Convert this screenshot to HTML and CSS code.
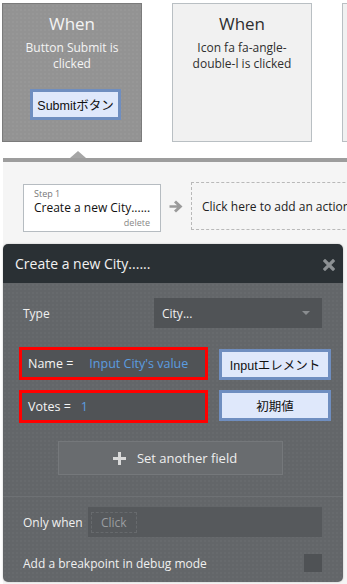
FILE: index.html
```html
<!DOCTYPE html>
<html>
<head>
<meta charset="utf-8">
<link rel="stylesheet" href="styles.css">
</head>
<body>
<div class="page">
  <div class="cards">
    <div class="card card-active">
      <div class="card-title">When</div>
      <div class="card-sub">Button Submit is clicked</div>
      <div class="jp-btn card-btn">Submitボタン</div>
    </div>
    <div class="card card-idle">
      <div class="card-title">When</div>
      <div class="card-sub">Icon fa fa-angle-double-l is clicked</div>
    </div>
    <div class="card card-idle"></div>
  </div>
  <div class="bar"></div>
  <div class="lower">
    <div class="flow">
      <div class="step">
        <div class="step-label">Step 1</div>
        <div class="step-name">Create a new City......</div>
        <div class="step-delete">delete</div>
      </div>
      <svg class="flow-arrow" width="14" height="13" viewBox="0 0 14 13"><path d="M7 0.5 L13.5 6.5 L7 12.5 L5 10.5 L8 7.8 L0.5 7.8 L0.5 5.2 L8 5.2 L5 2.5 Z" fill="#9a9a9a"/></svg>
      <div class="add-action">Click here to add an action</div>
    </div>
    <div class="panel">
      <div class="panel-head">
        <span class="panel-title">Create a new City......</span>
        <svg class="close" width="12" height="12" viewBox="0 0 12 12"><path d="M2 2 L10 10 M10 2 L2 10" stroke="#8c9093" stroke-width="3.2" stroke-linecap="square"/></svg>
      </div>
      <div class="panel-body">
        <div class="row type-row">
          <span class="label">Type</span>
          <div class="select"><span>City...</span><span class="caret"></span></div>
        </div>
        <div class="field-row first">
          <div class="field-box"><span class="fkey">Name =</span><span class="fval name-val">Input City's value</span></div>
          <div class="jp-btn side-btn side-first">Inputエレメント</div>
        </div>
        <div class="field-row second">
          <div class="field-box"><span class="fkey">Votes =</span><span class="fval votes-val">1</span></div>
          <div class="jp-btn side-btn">初期値</div>
        </div>
        <div class="set-field">
          <svg width="15" height="15" viewBox="0 0 15 15"><path d="M7.5 1 V14 M1 7.5 H14" stroke="#d9d9d9" stroke-width="3"/></svg>
          <span>Set another field</span>
        </div>
        <div class="sep"></div>
        <div class="row only-row">
          <span class="label">Only when</span>
          <div class="only-field"><span class="click-tag">Click</span></div>
        </div>
        <div class="row bp-row">
          <span class="label">Add a breakpoint in debug mode</span>
          <span class="checkbox"></span>
        </div>
      </div>
    </div>
  </div>
</div>
</body>
</html>
```
FILE: styles.css
```css
html, body {
  margin: 0;
  padding: 0;
  background: #ffffff;
}
.page {
  width: 347px;
  height: 584px;
  overflow: hidden;
  font-family: "Open Sans", "Noto Sans", sans-serif;
}
.cards {
  display: flex;
  gap: 30px;
  padding: 3px 0 0 2px;
  height: 142px;
  box-sizing: border-box;
  overflow: hidden;
}
.card {
  flex: 0 0 140px;
  height: 139px;
  box-sizing: border-box;
  text-align: center;
  padding-top: 9px;
}
.card-active {
  background-color: #939393;
  background-image: radial-gradient(rgba(255,255,255,0.08) 0.6px, transparent 0.8px);
  background-size: 4px 4px;
  border: 1px solid #7b7b7b;
  color: #f4f4f4;
}
.card-idle {
  background: #f1f1f1;
  border: 1px solid #b9bfc3;
  color: #2f2f2f;
}
.card-title {
  font-size: 17px;
  line-height: 22px;
}
.card-sub {
  font-size: 12px;
  line-height: 16px;
  margin-top: 5px;
  padding: 0 10px;
}
.jp-btn {
  font-family: "Liberation Sans", "Noto Sans CJK JP", sans-serif;
  font-size: 12.5px;
  color: #111;
  background: #dfe8fb;
  border: 3px solid #6f8ec0;
  box-sizing: border-box;
  display: flex;
  align-items: center;
  justify-content: center;
  flex: none;
}
.card-btn {
  width: 91px;
  height: 31px;
  margin: 17px 0 0 27px;
}
.bar {
  margin: 16px 0 0 3px;
  height: 4px;
  background: #9d9d9d;
  position: relative;
}
.bar::before {
  content: "";
  position: absolute;
  left: 67px;
  top: -7px;
  border-left: 8px solid transparent;
  border-right: 8px solid transparent;
  border-bottom: 7px solid #a6a6a6;
}
.lower {
  margin-left: 3px;
  background: #f5f5f5;
  height: 422px;
}
.flow {
  display: flex;
  align-items: flex-start;
  padding: 20px 0 0 20px;
  height: 82px;
  box-sizing: border-box;
  white-space: nowrap;
  overflow: hidden;
}
.step {
  margin-top: 2px;
  width: 138px;
  height: 48px;
  box-sizing: border-box;
  border: 1px solid #b6bcc1;
  background: #ffffff;
  padding: 3px 10px 0 10px;
  display: flex;
  flex-direction: column;
  flex: none;
}
.step-label {
  font-size: 9px;
  line-height: 12px;
  color: #777;
}
.step-name {
  font-size: 12px;
  line-height: 16px;
  color: #111;
}
.step-delete {
  font-size: 9px;
  line-height: 13px;
  color: #888;
  text-align: right;
}
.flow-arrow {
  margin: 18px 0 0 8px;
  flex: 0 0 auto;
}
.add-action {
  margin-left: 8px;
  height: 48px;
  box-sizing: border-box;
  border: 1px dashed #b9b9b9;
  padding-left: 10px;
  display: flex;
  align-items: center;
  font-size: 12px;
  color: #222;
  flex: 0 0 auto;
  width: 220px;
}
.panel {
  width: 340px;
  border-radius: 5px;
  overflow: hidden;
  box-shadow: 0 0 2px rgba(0,0,0,0.25);
}
.panel-head {
  height: 39px;
  background: #2a3034;
  display: flex;
  align-items: center;
  justify-content: space-between;
  padding: 0 8px 0 12px;
}
.panel-title {
  font-size: 14px;
  color: #f2f2f2;
}
.close {
  margin-top: 2px;
}
.panel-body {
  background-color: #636669;
  background-image: radial-gradient(rgba(255,255,255,0.05) 0.6px, transparent 0.8px);
  background-size: 4px 4px;
  padding: 15px 21px 10px 20px;
  color: #eeeeee;
  font-size: 12px;
}
.row {
  display: flex;
  align-items: center;
  justify-content: space-between;
}
.label {
  font-size: 12px;
  color: #f0f0f0;
}
.select {
  width: 168px;
  height: 30px;
  background: #505356;
  display: flex;
  align-items: center;
  justify-content: space-between;
  padding: 0 12px 0 8px;
  box-sizing: border-box;
  color: #f0f0f0;
}
.caret {
  border-left: 4px solid transparent;
  border-right: 4px solid transparent;
  border-top: 4px solid #8a8d90;
}
.field-row {
  display: flex;
  align-items: flex-start;
  margin-left: -4px;
}
.field-row.first { margin-top: 19px; }
.field-row.second { margin-top: 10px; }
.field-box {
  flex: none;
  width: 189px;
  height: 33px;
  box-sizing: border-box;
  border: 3px solid #ff0000;
  background: #505356;
  display: flex;
  align-items: center;
  padding-left: 6px;
  font-size: 12.5px;
}
.fkey { color: #f4f4f4; }
.fval { color: #5b9de0; }
.name-val { margin-left: 16px; }
.votes-val { margin-left: 10px; }
.side-btn {
  margin-left: 11px;
  width: 112px;
  height: 31px;
}
.side-first { margin-top: 2px; }
.set-field {
  margin: 18px 0 0 35px;
  width: 225px;
  height: 34px;
  box-sizing: border-box;
  background: #696c6f;
  border: 1px solid #75787b;
  display: flex;
  align-items: center;
  justify-content: center;
  gap: 10px;
  font-size: 13px;
  color: #eeeeee;
  padding-left: 8px;
}
.sep {
  margin: 21px -21px 0 -20px;
  height: 1px;
  background: #6e7174;
}
.only-row {
  margin-top: 10px;
}
.only-field {
  width: 234px;
  height: 30px;
  background: #56595c;
  display: flex;
  align-items: center;
  padding-left: 3px;
  box-sizing: border-box;
}
.click-tag {
  border: 1px dashed #676a6d;
  padding: 1px 9px;
  color: #9a9da0;
  font-size: 12px;
}
.bp-row {
  margin-top: 17px;
}
.checkbox {
  width: 18px;
  height: 18px;
  background: #4f5255;
}
```
